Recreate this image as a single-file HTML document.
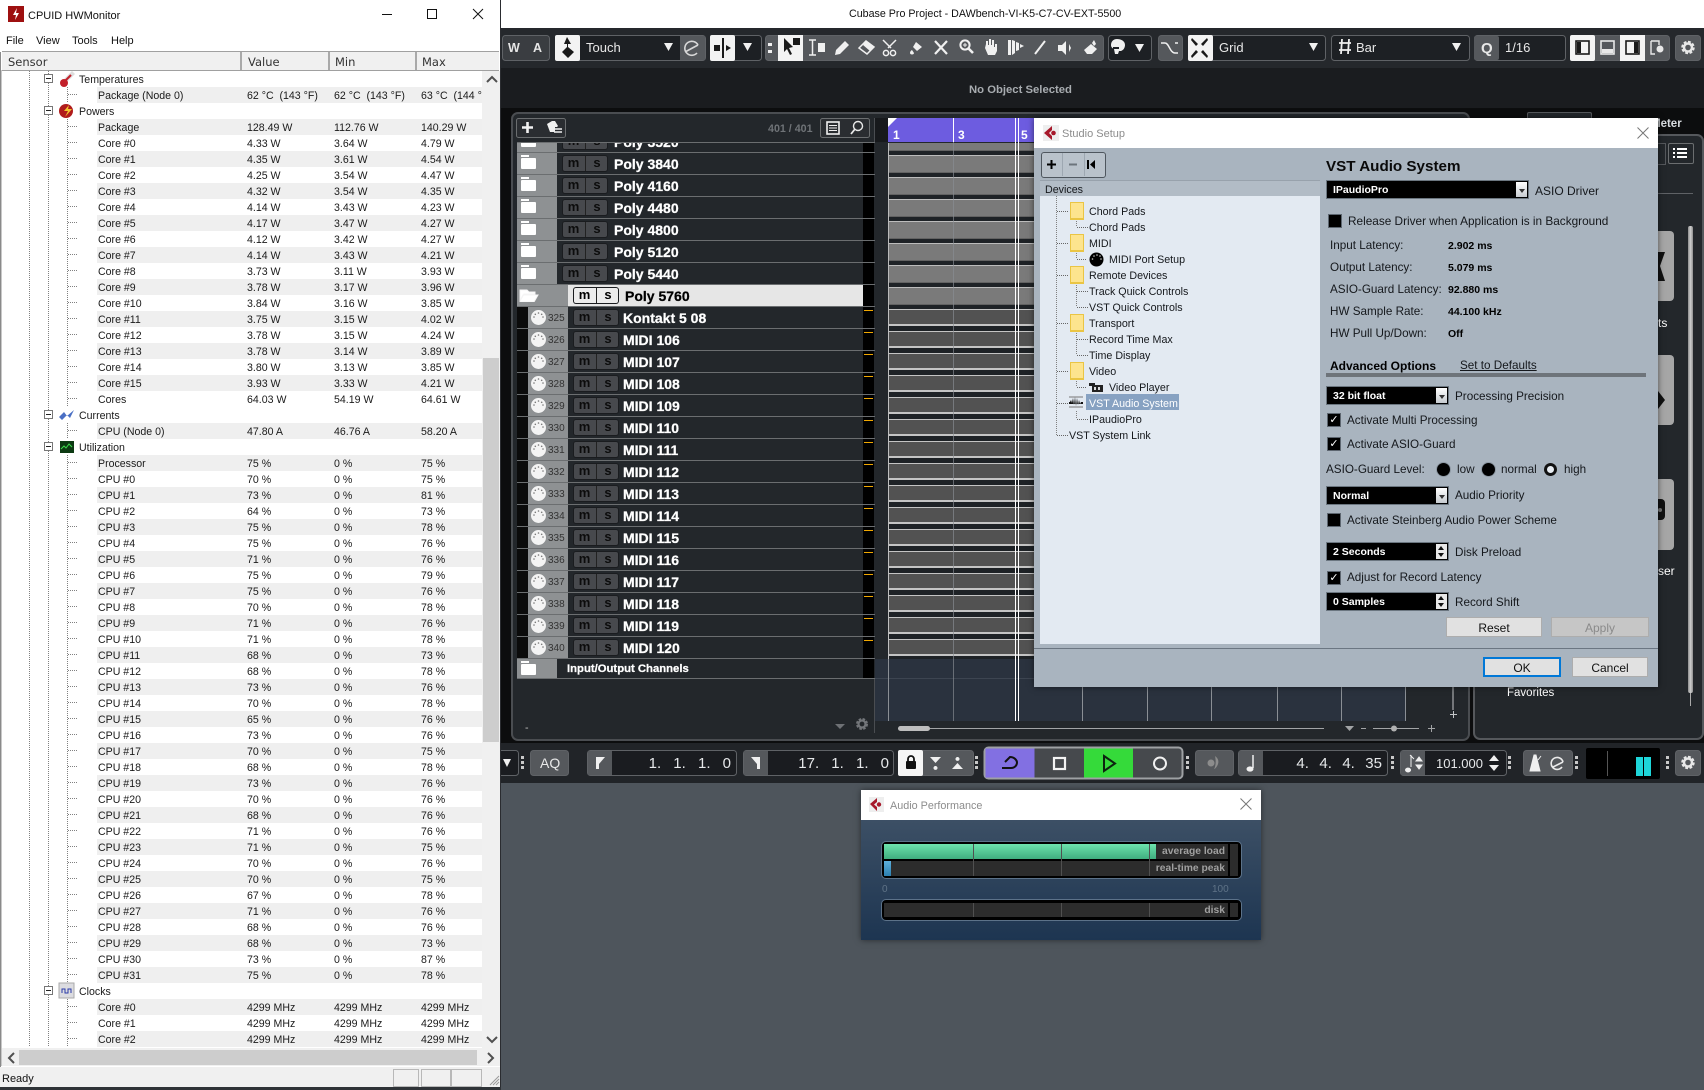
<!DOCTYPE html>
<html><head><meta charset="utf-8"><title>Cubase + HWMonitor</title>
<style>
html,body{margin:0;padding:0;width:1704px;height:1090px;overflow:hidden;background:#4e555c;font-family:"Liberation Sans",sans-serif}
.a0{position:absolute}
.x{position:absolute;white-space:pre;line-height:16px;font-size:10.7px;color:#15181c;margin-top:1px}
.bd{font-weight:bold}
/* HW monitor */
#hw{position:absolute;left:0;top:0;width:500px;height:1087px;background:#fff;overflow:hidden;border-right:1px solid #2a2c30}
#hd{position:absolute;left:2px;top:51px;width:497px;height:18px;background:#f0f0f0;border-top:1px solid #a0a0a0;border-bottom:1px solid #a0a0a0;font:11.5px/20px "DejaVu Sans",sans-serif;color:#333}
#hd span{position:absolute;top:0}
#hd i{position:absolute;top:0;width:2px;height:18px;background:#a9a9a9}
#tr{position:absolute;left:0;top:71px;width:482px;height:976px;overflow:hidden;font-size:10.6px;color:#1a1a1a}
.r,.g{position:relative;height:16px;line-height:16px;white-space:pre}
.r{background:repeating-linear-gradient(90deg,#808080 0 1px,transparent 1px 2px) 68px 7px/10px 1px no-repeat,repeating-linear-gradient(#808080 0 1px,transparent 1px 2px) 67px 0/1px 16px no-repeat}
.r.a{background:repeating-linear-gradient(90deg,#808080 0 1px,transparent 1px 2px) 68px 7px/10px 1px no-repeat,repeating-linear-gradient(#808080 0 1px,transparent 1px 2px) 67px 0/1px 16px no-repeat,linear-gradient(#efefef,#efefef) 97px 0/385px 16px no-repeat}
.r b,.r i,.r em,.r s,.g b{position:absolute;top:1px;font-weight:normal;font-style:normal;text-decoration:none}
.r b{left:98px}.r i{left:247px}.r em{left:334px}.r s{left:421px}
.g b{left:79px}
.g u{position:absolute;left:44px;top:3px;width:7px;height:7px;border:1px solid #777;background:#fff;text-decoration:none}
.g u::after{content:"";position:absolute;left:1px;top:3px;width:5px;height:1px;background:#222}
.g svg{position:absolute;left:58px;top:-1px}
.vl{position:absolute;width:1px;background:repeating-linear-gradient(#808080 0 1px,transparent 1px 2px)}
/* tracks */
.t{position:absolute;left:517px;width:358px;height:21px;border-bottom:1px solid #6b6e70;color:#fff;font-size:14px;font-weight:bold;line-height:23px;background:linear-gradient(#000,#000) 346px 0/11px 100% no-repeat,#23272b}
.m{background:linear-gradient(#f3a900,#f3a900) 347px 3px/9px 1px no-repeat,linear-gradient(#000,#000) 346px 0/11px 100% no-repeat,#23272b}
.t>em{position:absolute;top:0;height:21px;background:#8e9193}
.p>em{left:0;width:40px}.m>em,.sel>em{left:11px;width:40px}
.m::before{content:"";position:absolute;left:0;top:0;width:11px;height:21px;background:#0b0b0b}
.sel>em{left:0;width:51px}
.fd::before{content:"";position:absolute;left:4px;top:5px;width:15px;height:11px;background:#fff;border-radius:1px}
.fd::after{content:"";position:absolute;left:4px;top:2px;width:8px;height:2px;background:#fff}
.t>b{position:absolute;top:0;-webkit-text-stroke:.25px currentColor}
.p>b{left:97px}.m>b{left:106px}
.ms{position:absolute;top:3px;width:44px;height:15px;background:#47494d;border-radius:2px;box-shadow:0 0 0 1px #1a1c1f;font:bold 13px/13px "Liberation Sans",sans-serif;color:#0c0c0c;text-align:center}
.ms i{position:absolute;left:0;top:0;width:21px;font-style:normal}
.ms i+i{left:22px;width:22px;border-left:1px solid #222;height:15px}
.p .ms{left:46px}.m .ms,.sel .ms{left:57px}
.n{position:absolute;left:31px;top:0;font:normal 10px/23px "Liberation Sans",sans-serif;color:#333;width:17px}
.t svg{position:absolute;left:14px;top:3px}
/* dialogs */
.fo{position:absolute;left:1070px;width:12px;height:15px;background:#fde48e;border:1px solid #eac544;border-bottom-width:2px}
.blk{position:absolute;background:#000;border:1px solid #6b7680;box-shadow:inset 0 0 0 1px #000;color:#fff;font:bold 10.5px/19px "Liberation Sans",sans-serif;padding-left:6px;box-sizing:border-box;height:19px}
.arr{position:absolute;right:1px;top:1px;bottom:1px;width:11px;background:linear-gradient(#fff,#c6cbd0)}
.arr::after{content:"";position:absolute;left:3px;top:7px;border:3px solid transparent;border-top:4px solid #333;border-bottom:0}
.spn{position:absolute;right:1px;top:1px;bottom:1px;width:11px;background:#e8e8e8}
.spn::before{content:"";position:absolute;left:2px;top:2px;border:3px solid transparent;border-bottom:4px solid #111;border-top:0}
.spn::after{content:"";position:absolute;left:2px;bottom:2px;border:3px solid transparent;border-top:4px solid #111;border-bottom:0}
.cb{position:absolute;width:12px;height:12px;background:#000;border:1px solid #5d6670;color:#fff;font:bold 11px/12px "DejaVu Sans",sans-serif;text-align:center}
.rd{position:absolute;width:13px;height:13px;border-radius:50%;background:#000;box-shadow:0 0 0 1px #8d98a3}
.btn{position:absolute;background:#e1e1e1;border:1px solid #adadad;box-sizing:border-box;text-align:center;font-size:12px;height:20px;line-height:21px;color:#111}
</style></head><body>

<!-- Cubase base -->
<div class="a0" style="left:501px;top:0;width:1203px;height:28px;background:#fff"></div>
<div class="x" style="left:849px;top:5px;font-size:10.7px;color:#111">Cubase Pro Project - DAWbench-VI-K5-C7-CV-EXT-5500</div>
<div class="a0" style="left:501px;top:28px;width:1203px;height:40px;background:#25282c"></div>
<div class="a0" style="left:501px;top:68px;width:1203px;height:40px;background:#1a1c1f"></div>
<div class="x bd" style="left:969px;top:81px;font-size:11.3px;color:#a8acb0">No Object Selected</div>
<div class="a0" style="left:501px;top:108px;width:1203px;height:635px;background:#0c0d0e"></div>
<!-- project panel -->
<div class="a0" style="left:511px;top:112px;width:955px;height:625px;background:#23272b;border:2px solid #4a4d51;border-radius:7px;box-sizing:content-box"></div>
<div class="a0" style="left:1527px;top:112px;width:63px;height:10px;background:#23272b;border:1px solid #55585c;border-bottom:0;border-radius:2px 2px 0 0"></div>
<div class="a0" style="left:874px;top:118px;width:1px;height:615px;background:#4a4d51"></div>
<div class="x bd" style="left:768px;top:120px;font-size:10.7px;color:#6f7377">401 / 401</div>
<div class="a0" style="left:517px;top:142px;width:358px;height:1px;background:#6b6e70"></div>
<!-- track column -->
<div class="t p" style="top:131px;height:21px;clip-path:inset(12px 0 0 0)"><em class="fd"></em><div class="ms"><i>m</i><i>s</i></div><b>Poly 3520</b></div>
<div class="t p" style="top:153px"><em class="fd"></em><div class="ms"><i>m</i><i>s</i></div><b>Poly 3840</b></div>
<div class="t p" style="top:175px"><em class="fd"></em><div class="ms"><i>m</i><i>s</i></div><b>Poly 4160</b></div>
<div class="t p" style="top:197px"><em class="fd"></em><div class="ms"><i>m</i><i>s</i></div><b>Poly 4480</b></div>
<div class="t p" style="top:219px"><em class="fd"></em><div class="ms"><i>m</i><i>s</i></div><b>Poly 4800</b></div>
<div class="t p" style="top:241px"><em class="fd"></em><div class="ms"><i>m</i><i>s</i></div><b>Poly 5120</b></div>
<div class="t p" style="top:263px"><em class="fd"></em><div class="ms"><i>m</i><i>s</i></div><b>Poly 5440</b></div>
<div class="t sel" style="top:285px;background:linear-gradient(#000,#000) 346px 0/11px 100% no-repeat,linear-gradient(#e6e6e6,#e6e6e6) 51px 0/295px 100% no-repeat,#23272b;color:#000"><em></em><svg style="left:2px;top:2px" width="20" height="15" viewBox="0 0 20 15"><path d="M1 14V3h7l2 2h6v2H5L1 14l3-6h15l-4 7H1z" fill="#fff" stroke="#f4f4f4"/></svg><div class="ms" style="background:#ececec;color:#000"><i>m</i><i>s</i></div><b style="left:108px">Poly 5760</b></div>
<svg width="0" height="0" style="position:absolute"><symbol id="k" viewBox="0 0 15 15"><circle cx="7.500" cy="7.500" r="7.500" fill="#f4f4f4"/><g fill="#777"><circle cx="3" cy="7" r=".8"/><circle cx="4.300" cy="4.300" r=".8"/><circle cx="7.500" cy="3" r=".8"/><circle cx="10.700" cy="4.300" r=".8"/><circle cx="12" cy="7" r=".8"/></g></symbol></svg>
<div class="t m" style="top:307px"><em></em><svg width="15" height="15"><use href="#k"/></svg><span class="n">325</span><div class="ms"><i>m</i><i>s</i></div><b>Kontakt 5 08</b></div>
<div class="t m" style="top:329px"><em></em><svg width="15" height="15"><use href="#k"/></svg><span class="n">326</span><div class="ms"><i>m</i><i>s</i></div><b>MIDI 106</b></div>
<div class="t m" style="top:351px"><em></em><svg width="15" height="15"><use href="#k"/></svg><span class="n">327</span><div class="ms"><i>m</i><i>s</i></div><b>MIDI 107</b></div>
<div class="t m" style="top:373px"><em></em><svg width="15" height="15"><use href="#k"/></svg><span class="n">328</span><div class="ms"><i>m</i><i>s</i></div><b>MIDI 108</b></div>
<div class="t m" style="top:395px"><em></em><svg width="15" height="15"><use href="#k"/></svg><span class="n">329</span><div class="ms"><i>m</i><i>s</i></div><b>MIDI 109</b></div>
<div class="t m" style="top:417px"><em></em><svg width="15" height="15"><use href="#k"/></svg><span class="n">330</span><div class="ms"><i>m</i><i>s</i></div><b>MIDI 110</b></div>
<div class="t m" style="top:439px"><em></em><svg width="15" height="15"><use href="#k"/></svg><span class="n">331</span><div class="ms"><i>m</i><i>s</i></div><b>MIDI 111</b></div>
<div class="t m" style="top:461px"><em></em><svg width="15" height="15"><use href="#k"/></svg><span class="n">332</span><div class="ms"><i>m</i><i>s</i></div><b>MIDI 112</b></div>
<div class="t m" style="top:483px"><em></em><svg width="15" height="15"><use href="#k"/></svg><span class="n">333</span><div class="ms"><i>m</i><i>s</i></div><b>MIDI 113</b></div>
<div class="t m" style="top:505px"><em></em><svg width="15" height="15"><use href="#k"/></svg><span class="n">334</span><div class="ms"><i>m</i><i>s</i></div><b>MIDI 114</b></div>
<div class="t m" style="top:527px"><em></em><svg width="15" height="15"><use href="#k"/></svg><span class="n">335</span><div class="ms"><i>m</i><i>s</i></div><b>MIDI 115</b></div>
<div class="t m" style="top:549px"><em></em><svg width="15" height="15"><use href="#k"/></svg><span class="n">336</span><div class="ms"><i>m</i><i>s</i></div><b>MIDI 116</b></div>
<div class="t m" style="top:571px"><em></em><svg width="15" height="15"><use href="#k"/></svg><span class="n">337</span><div class="ms"><i>m</i><i>s</i></div><b>MIDI 117</b></div>
<div class="t m" style="top:593px"><em></em><svg width="15" height="15"><use href="#k"/></svg><span class="n">338</span><div class="ms"><i>m</i><i>s</i></div><b>MIDI 118</b></div>
<div class="t m" style="top:615px"><em></em><svg width="15" height="15"><use href="#k"/></svg><span class="n">339</span><div class="ms"><i>m</i><i>s</i></div><b>MIDI 119</b></div>
<div class="t m" style="top:637px"><em></em><svg width="15" height="15"><use href="#k"/></svg><span class="n">340</span><div class="ms"><i>m</i><i>s</i></div><b>MIDI 120</b></div>
<div class="t p" style="top:659px;height:19px"><em class="fd" style="height:19px"></em><b style="left:50px;font-size:11.300px;line-height:21px">Input/Output Channels</b></div>
<div class="x" style="left:525px;top:719px;color:#bbb">-</div>

<!-- arrangement -->
<div class="a0" style="left:875px;top:118px;width:13px;height:24px;background:#17191c"></div>
<div class="a0" style="left:888px;top:118px;width:146px;height:24px;background:#6d5ce0"></div>
<div class="x bd" style="left:893px;top:126px;font-size:12px;color:#fff">1</div>
<div class="x bd" style="left:958px;top:126px;font-size:12px;color:#fff">3</div>
<div class="x bd" style="left:1021px;top:126px;font-size:12px;color:#fff">5</div>
<div class="a0" style="left:953px;top:118px;width:1px;height:24px;background:#fff"></div>
<svg class="a0" style="left:888px;top:118px" width="10" height="10"><path d="M0 0h9L0 9z" fill="#fff"/></svg>
<div class="a0" style="left:875px;top:143px;width:159px;height:516px;background:#23272b"></div>
<div class="a0" style="left:888px;top:131px;width:146px;height:176px;clip-path:inset(12px 0 0 0);background:linear-gradient(#bbb,#bbb) 0 0/1px 100% no-repeat,linear-gradient(#1e2226 0 2px,#bcbcbc 2px 3px,#7a7a7a 3px 19px,#626262 19px 20px,#1e2226 20px 22px) 0 0/100% 22px"></div>
<div class="a0" style="left:888px;top:307px;width:146px;height:352px;background:linear-gradient(#c0c0c0,#c0c0c0) 0 0/1px 100% no-repeat,linear-gradient(#1e2226 0 2px,#c4c4c4 2px 3px,#525252 3px 17px,#c4c4c4 17px 19px,#1e2226 19px 22px) 0 0/100% 22px"></div>
<div class="a0" style="left:875px;top:659px;width:531px;height:62px;background:#2a323e"></div>
<div class="a0" style="left:875px;top:678px;width:531px;height:1px;background:#3d4551"></div>
<div class="a0" style="left:888px;top:659px;width:1px;height:62px;background:#8a8f95"></div>
<div class="a0" style="left:953px;top:142px;width:1px;height:579px;background:#8a8f95;opacity:.65"></div>
<div class="a0" style="left:1082px;top:659px;width:1px;height:62px;background:#8a8f95"></div>
<div class="a0" style="left:1147px;top:659px;width:1px;height:62px;background:#8a8f95"></div>
<div class="a0" style="left:1211px;top:659px;width:1px;height:62px;background:#8a8f95"></div>
<div class="a0" style="left:1277px;top:659px;width:1px;height:62px;background:#8a8f95"></div>
<div class="a0" style="left:1341px;top:659px;width:1px;height:62px;background:#8a8f95"></div>
<div class="a0" style="left:1405px;top:659px;width:1px;height:62px;background:#8a8f95"></div>
<div class="a0" style="left:1015px;top:118px;width:1px;height:603px;background:#fff"></div>
<div class="a0" style="left:1018px;top:118px;width:1px;height:603px;background:#fff"></div>

<!-- Right zone -->
<div class="a0" style="left:1473px;top:134px;width:227px;height:602px;background:#23272b;border:2px solid #55585c;border-radius:7px"></div>
<div class="x bd" style="left:1651px;top:115px;font-size:11.500px;color:#d9dde1">Meter</div>
<div class="a0" style="left:1658px;top:143px;width:7px;height:20px;border:1px solid #55585c;border-left:0"></div>
<div class="a0" style="left:1668px;top:143px;width:24px;height:19px;border:1px solid #6b6e70;border-radius:2px"></div>
<svg class="a0" style="left:1673px;top:146px" width="14" height="14"><path d="M0 2h2v2H0zM4 2h10v2H4zM0 6h2v2H0zM4 6h10v2H4zM0 10h2v2H0zM4 10h10v2H4z" fill="#fff"/></svg>
<div class="a0" style="left:1658px;top:193px;width:35px;height:1px;background:#5f6266"></div>
<div class="a0" style="left:1640px;top:231px;width:34px;height:70px;background:#a6a6a6;border-radius:4px"></div>
<div class="a0" style="left:1640px;top:355px;width:34px;height:70px;background:#a6a6a6;border-radius:4px"></div>
<div class="a0" style="left:1640px;top:479px;width:34px;height:71px;background:#a6a6a6;border-radius:4px"></div>
<svg class="a0" style="left:1650px;top:240px" width="20" height="170"><path d="M8 12h7L10 26l5 15H8z" fill="#111"/><path d="M8 151l7 9-7 9z" fill="#111"/></svg>
<div class="a0" style="left:1652px;top:499px;width:13px;height:21px;background:#111;border-radius:4px"></div>
<div class="a0" style="left:1658px;top:508px;width:4px;height:4px;background:#777;border-radius:50%"></div>
<div class="x" style="left:1658px;top:314px;font-size:12px;color:#fff">ts</div>
<div class="x" style="left:1658px;top:562px;font-size:12px;color:#fff">ser</div>
<div class="x" style="left:1507px;top:684px;font-size:11.500px;color:#fff">Favorites</div>
<div class="a0" style="left:1688px;top:226px;width:5px;height:467px;background:linear-gradient(90deg,#8d8d8d,#cfcfcf,#8d8d8d);border-radius:2px"></div>
<div class="a0" style="left:1690px;top:693px;width:1px;height:13px;background:#aaa"></div>

<!-- Transport background -->
<div class="a0" style="left:501px;top:743px;width:1203px;height:40px;background:#212428"></div>

<!-- Overlay: toolbar + transport -->
<svg class="a0" style="left:0;top:0" width="1704" height="1090" font-family="Liberation Sans, sans-serif">
<g stroke="#5f6266" fill="#1d2024">
<rect x="502.500" y="35.500" width="47" height="25" rx="3" fill="#3a3d41"/>
<rect x="555.500" y="35.500" width="150" height="25" rx="3"/>
<rect x="710.500" y="35.500" width="51" height="25" rx="3"/>
<rect x="765.500" y="35.500" width="338" height="25" rx="3" fill="#55585c"/>
<rect x="1108.500" y="35.500" width="43" height="25" rx="3"/>
<rect x="1158.500" y="35.500" width="24" height="25" rx="3" fill="#55585c"/>
<rect x="1188.500" y="35.500" width="137" height="25" rx="3"/>
<rect x="1331.500" y="35.500" width="138" height="25" rx="3"/>
<rect x="1474.500" y="35.500" width="91" height="25" rx="3"/>
<rect x="1570.500" y="35.500" width="99" height="25" rx="3" fill="#55585c"/>
<rect x="1675.500" y="35.500" width="25" height="25" rx="3" fill="#55585c"/>
</g>
<g fill="#f3f3f3">
<rect x="555" y="35" width="25" height="26" rx="2"/><rect x="710" y="35" width="25" height="26" rx="2"/><rect x="778" y="35" width="25" height="26"/>
<rect x="1188" y="35" width="25" height="26" rx="2"/><rect x="1570" y="35" width="25" height="26" rx="2"/><rect x="1620" y="35" width="25" height="26"/>
</g>
<rect x="680" y="36" width="25" height="24" fill="#55585c"/><rect x="1474" y="36" width="25" height="24" rx="2" fill="#55585c"/>
<g font-weight="bold" font-size="12.500" fill="#e6e6e6"><text x="508" y="52">W</text><text x="533" y="52">A</text></g>
<g font-size="13" fill="#e8e8e8"><text x="586" y="52">Touch</text><text x="1219" y="52">Grid</text><text x="1356" y="52">Bar</text><text x="1505" y="52">1/16</text></g>
<!-- toolbar icons -->
<g fill="#1a1a1a">
<path d="M567 37l4 7h-3v3l6 5-6 6-6-6 5-5v-3h-3z"/>
<path d="M722 38h2v20h-2zM714 45h6v6h-6zM726 45l5 3-5 3z"/>
<path d="M784 38l9 9-4 1 3 6-2 1-3-6-3 3zM793 38h7v7h-7z"/>
<path d="M1192 38l6 6-2 2-5-6zM1207 38l-6 6 2 2 5-6zM1192 58l6-6-2-2-5 6zM1207 58l-6-6 2-2 5 6z"/>
<rect x="1576" y="41" width="13" height="13" fill="none" stroke="#1a1a1a" stroke-width="1.600"/><rect x="1577" y="42" width="4" height="11"/>
<rect x="1626" y="41" width="13" height="13" fill="none" stroke="#1a1a1a" stroke-width="1.600"/><rect x="1634" y="42" width="4" height="11"/>
</g>
<g fill="#f0f0f0">
<path d="M664 43h9l-4.500 8zM743 43h9l-4.500 8zM1309 43h9l-4.500 8zM1452 43h9l-4.500 8z"/>
<rect x="768" y="43" width="4" height="3"/><rect x="768" y="50" width="4" height="3"/>
<path d="M809 40h7M809 55h7M812.500 40v15" stroke="#f0f0f0" stroke-width="1.500" fill="none"/><rect x="818" y="43" width="7" height="9"/>
<path d="M835 55l1-5 9-9 4 4-9 9z"/>
<path d="M859 48l7-7 8 6-7 7z" fill="none" stroke="#f0f0f0" stroke-width="1.500"/><path d="M866 41l8 6-4 4-7-6z"/>
<path d="M883 40l8 8M896 40l-8 8" stroke="#f0f0f0" stroke-width="1.500"/><circle cx="886" cy="53" r="2.600" fill="none" stroke="#f0f0f0" stroke-width="1.500"/><circle cx="893" cy="53" r="2.600" fill="none" stroke="#f0f0f0" stroke-width="1.500"/>
<path d="M916 42l6 5-5 4-4-4zM910 53c0-2 2-3 2-3l2 3c0 2-4 2-4 0z"/>
<path d="M935 41l12 13M947 41l-12 13" stroke="#f0f0f0" stroke-width="2.200"/>
<circle cx="965" cy="45" r="4.600" fill="none" stroke="#f0f0f0" stroke-width="2"/><path d="M968 48l5 5" stroke="#f0f0f0" stroke-width="2.600"/><path d="M963 45h4M965 43v4" stroke="#f0f0f0"/>
<path d="M986 44v-3h2v4h1v-6h2v6h1v-5h2v7h1v-3h2v7l-2 4h-7l-3-7z"/>
<path d="M1008 40h3v15h-3zM1012 40l3 1v12l-3 2zM1016 42l3 1v7l-3 1zM1020 44l4 2-4 2z"/>
<path d="M1035 54l10-13" stroke="#f0f0f0" stroke-width="2"/>
<path d="M1058 45h4l4-4v14l-4-4h-4zM1069 44l2 4-2 4z"/>
<path d="M1084 50l7-6 6 5-5 5h-5zM1094 40l2 4-2 2-2-3z"/>
<path d="M1117 39c-4 0-6 3-6 6 0 2 1 3 3 4l1 5h3l1-3h2c3-1 4-4 4-6 0-4-4-6-8-6z"/><path d="M1113 47h6v2h-6z" fill="#1d2024"/>
<path d="M1135 44h9l-4.500 8z"/>
<path d="M1161 43h4c4 0 5 10 10 10h3M1175 43h3" stroke="#f0f0f0" stroke-width="1.500" fill="none"/>
<path d="M1339 43h12M1339 50h12M1342 39l-1 15M1349 39l-1 15" stroke="#f0f0f0" stroke-width="1.800"/>
</g>
<g font-weight="bold" font-size="15" fill="#e8e8e8"><text x="1481" y="53">Q</text></g>
<path d="M698 45a7 7 0 1 0-1 8M685 52l13-7" fill="none" stroke="#d8d8d8" stroke-width="1.600"/>
<rect x="1601" y="41" width="13" height="13" fill="none" stroke="#e8e8e8" stroke-width="1.600"/><rect x="1602" y="49" width="11" height="4" fill="#e8e8e8"/>
<path d="M1651 41h8v4M1651 41v13h4" fill="none" stroke="#e8e8e8" stroke-width="1.400"/><circle cx="1660" cy="49" r="3.500" fill="#e8e8e8"/>
<circle cx="1688" cy="47.500" r="5" fill="none" stroke="#e8e8e8" stroke-width="3.500" stroke-dasharray="2.500 1.400"/><circle cx="1688" cy="47.500" r="4" fill="none" stroke="#e8e8e8" stroke-width="2.500"/>

<!-- project buttons -->
<g stroke="#6b6e70" fill="#2a2d31"><rect x="516.500" y="118.500" width="49" height="19" rx="2"/><rect x="820.500" y="118.500" width="49" height="19" rx="2"/></g>
<path d="M522 127.500h11M527.500 122v11" stroke="#f2f2f2" stroke-width="2.600"/>
<path d="M547 124l5-3h3l3 5-1 1h-2v5h-5z" fill="#f0f0f0"/><path d="M554 129h8M554 132h8" stroke="#f0f0f0" stroke-width="1.500"/>
<rect x="827" y="122" width="12" height="12" fill="none" stroke="#f0f0f0" stroke-width="1.600"/><path d="M829 125.500h8M829 128h8M829 130.500h8" stroke="#f0f0f0"/>
<circle cx="858" cy="126" r="4.500" fill="none" stroke="#e8e8e8" stroke-width="1.400"/><path d="M855 129l-4 5" stroke="#e8e8e8" stroke-width="1.800"/>
<!-- bottom controls -->
<path d="M835 724h10l-5 5z" fill="#6e7175"/>
<circle cx="862" cy="724" r="4.500" fill="none" stroke="#73767a" stroke-width="3" stroke-dasharray="2.300 1.300"/><circle cx="862" cy="724" r="3.500" fill="none" stroke="#73767a" stroke-width="2.200"/>
<path d="M898 728.500H1324" stroke="#a2a4a6"/><rect x="898" y="726" width="32" height="5" rx="2.500" fill="#bdbdbd"/>
<path d="M1345 726h9l-4.500 5z" fill="#a2a4a6"/><path d="M1361 728.500h5M1373 728.500h46M1428 728.500h7M1431.500 725v7" fill="none" stroke="#a2a4a6"/><circle cx="1394" cy="728.500" r="3" fill="#b0b0b0"/>
<path d="M1453 687v23M1450 714.500h7M1453.500 711v7" stroke="#c4c6c8"/>

<!-- transport -->
<g stroke="#5f6266" fill="#1a1c20">
<rect x="498.500" y="750.500" width="20" height="25" rx="3"/>
<rect x="530.500" y="750.500" width="38" height="25" rx="3" fill="#55585c"/>
<rect x="587.500" y="750.500" width="149" height="25" rx="3"/>
<rect x="743.500" y="750.500" width="150" height="25" rx="3"/>
<rect x="898.500" y="750.500" width="75" height="25" rx="3" fill="#55585c"/>
<rect x="1195.500" y="750.500" width="38" height="25" rx="3" fill="#55585c"/>
<rect x="1238.500" y="750.500" width="149" height="25" rx="3"/>
<rect x="1400.500" y="750.500" width="106" height="25" rx="3"/>
<rect x="1523.500" y="750.500" width="49" height="25" rx="3" fill="#55585c"/>
<rect x="1675.500" y="750.500" width="25" height="25" rx="3" fill="#55585c"/>
</g>
<rect x="498" y="750" width="3" height="26" fill="#0c0d0e"/>
<g fill="#55585c"><rect x="588" y="751" width="24" height="24"/><rect x="744" y="751" width="24" height="24"/><rect x="1239" y="751" width="24" height="24"/><rect x="1401" y="751" width="24" height="24"/></g>
<rect x="898" y="750" width="25" height="26" rx="2" fill="#f5f5f5"/>
<rect x="984.500" y="747.500" width="198" height="31" rx="4" fill="#46494d" stroke="#9ea1a4" stroke-width="2"/>
<rect x="985.500" y="748.500" width="49" height="29" fill="#8270e2"/><rect x="1084" y="748.500" width="49" height="29" fill="#35da3a"/>
<path d="M503 759h8l-4 8zM596 757h9l-6 7v5h-3zM760 757h-9l6 7v5h3z" fill="#f0f0f0"/>
<g fill="#c8c8c8"><rect x="521" y="756" width="3" height="3"/><rect x="521" y="761" width="3" height="3"/><rect x="521" y="766" width="3" height="3"/><rect x="975" y="756" width="3" height="3"/><rect x="975" y="761" width="3" height="3"/><rect x="975" y="766" width="3" height="3"/><rect x="1186" y="756" width="3" height="3"/><rect x="1186" y="761" width="3" height="3"/><rect x="1186" y="766" width="3" height="3"/><rect x="1391" y="756" width="3" height="3"/><rect x="1391" y="761" width="3" height="3"/><rect x="1391" y="766" width="3" height="3"/><rect x="1508" y="756" width="3" height="3"/><rect x="1508" y="761" width="3" height="3"/><rect x="1508" y="766" width="3" height="3"/><rect x="1575" y="756" width="3" height="3"/><rect x="1575" y="761" width="3" height="3"/><rect x="1575" y="766" width="3" height="3"/><rect x="1666" y="756" width="3" height="3"/><rect x="1666" y="761" width="3" height="3"/><rect x="1666" y="766" width="3" height="3"/></g>
<path d="M908 761v-2a3 3 0 0 1 6 0v2" fill="none" stroke="#111" stroke-width="1.800"/><rect x="906" y="761" width="10" height="8" rx="1" fill="#111"/>
<path d="M930 757h11l-5.500 6zM935 766a2 2 0 1 0 1 0zM952 769h11l-5.500-6zM957 757a2 2 0 1 0 1 0z" fill="#f0f0f0"/>
<path d="M1002 768h9c4 0 6-3 6-5.500S1014 757 1010 757L1005 762" fill="none" stroke="#111" stroke-width="2"/>
<rect x="1054" y="758" width="11" height="11" fill="none" stroke="#f3f3f3" stroke-width="2.200"/>
<path d="M1104 756l11 7.500-11 7.500z" fill="none" stroke="#0d2410" stroke-width="2"/>
<circle cx="1160" cy="763.500" r="6" fill="none" stroke="#f0f0f0" stroke-width="2"/>
<path d="M1215 756c3 2 4 5 3 8s-3 5-4 5c2-3 2-9 1-13z" fill="#8c8c8c"/><circle cx="1211" cy="763" r="3.500" fill="#8c8c8c"/>
<path d="M1253 755v13" stroke="#f0f0f0" stroke-width="1.500"/><ellipse cx="1250" cy="769" rx="3.500" ry="2.600" fill="#f0f0f0"/>
<path d="M1411 755v12M1408 768a2.500 2 0 1 0 .1 0M1414 759l-4-4M1419 757l-3 4h6zM1419 769l-3-4h6z" fill="#f0f0f0" stroke="#f0f0f0"/>
<path d="M1489 761l5-6 5 6zM1489 765l5 6 5-6z" fill="#f0f0f0"/>
<path d="M1530 771l4-16h2l4 16zM1541 756l-3 4" fill="#f0f0f0" stroke="#f0f0f0"/>
<path d="M1563 762a6 6 0 1 0-1 5M1553 767l10-5" fill="none" stroke="#eaeaea" stroke-width="1.600"/>
<rect x="1586" y="748" width="74" height="31" rx="2" fill="#000"/><rect x="1607" y="751" width="1" height="25" fill="#555"/><rect x="1636" y="757" width="7" height="19" fill="#1ed6da"/><rect x="1644" y="757" width="7" height="19" fill="#1ed6da"/>
<circle cx="1688" cy="762.500" r="5" fill="none" stroke="#e8e8e8" stroke-width="3.500" stroke-dasharray="2.500 1.400"/><circle cx="1688" cy="762.500" r="4" fill="none" stroke="#e8e8e8" stroke-width="2.500"/>
<text x="540" y="768" font-size="14" fill="#e8e8e8">AQ</text>
<g font-size="15" fill="#e6e8ea" text-anchor="end" word-spacing="8"><text x="731" y="768">1. 1. 1.  0</text><text x="889" y="768">17. 1. 1.  0</text></g>
<text x="1382" y="768" font-size="15" fill="#e6e8ea" text-anchor="end" word-spacing="6.300">4. 4. 4. 35</text>
<text x="1436" y="768" font-size="13" fill="#e6e8ea">101.000</text>
</svg>

<!-- Studio Setup dialog -->
<div class="a0" style="left:1034px;top:118px;width:624px;height:569px;background:#a9b4bf;box-shadow:0 0 6px rgba(0,0,0,.55)"></div>
<div class="a0" style="left:1034px;top:118px;width:624px;height:30px;background:#fff"></div>
<svg class="a0" style="left:1043px;top:125px" width="16" height="16"><rect width="16" height="16" fill="#eee"/><path d="M1 8l8-7v4L6 8l3 3v4z" fill="#a7192b"/><circle cx="10.500" cy="8" r="2.300" fill="#a7192b"/></svg>
<div class="x" style="left:1062px;top:125px;font-size:11px;color:#8c8c8c">Studio Setup</div>
<svg class="a0" style="left:1637px;top:127px" width="12" height="12"><path d="M.5.500l11 11M11.500.500l-11 11" stroke="#777" fill="none"/></svg>
<div class="a0" style="left:1041px;top:152px;width:63px;height:24px;background:#b9c2cb;border:1px solid #4e565e;border-radius:3px"></div>
<svg class="a0" style="left:1041px;top:152px" width="65" height="26"><path d="M21.500 1v23M43.500 1v23" stroke="#9da7b1"/><path d="M6 12.500h9M10.500 8v9" stroke="#000" stroke-width="2"/><path d="M28 12.500h8" stroke="#6c747c" stroke-width="2"/><path d="M46 8h2v9h-2zM49 12.500l5-4.500v9z" fill="#000"/></svg>
<div class="a0" style="left:1040px;top:180px;width:280px;height:15px;background:#b2bcc6;border-bottom:1px solid #616a73;border-top:1px solid #98a2ac"></div>
<div class="x" style="left:1045px;top:181px">Devices</div>
<div class="a0" style="left:1040px;top:196px;width:280px;height:448px;background:#e3eaf2"></div>
<div class="vl" style="left:1056px;top:196px;height:239px"></div>
<div class="vl" style="left:1076px;top:219px;height:8px"></div><div class="vl" style="left:1076px;top:251px;height:8px"></div><div class="vl" style="left:1076px;top:283px;height:24px"></div><div class="vl" style="left:1076px;top:331px;height:24px"></div><div class="vl" style="left:1076px;top:379px;height:8px"></div><div class="vl" style="left:1076px;top:411px;height:8px"></div>
<svg class="a0" style="left:1040px;top:196px" width="60" height="250"><g stroke="#666" stroke-dasharray="1 1"><path d="M17 15.500h12M17 47.500h12M17 79.500h12M17 127.500h12M17 175.500h12M17 207.500h12M17 239.500h12M37 31.500h11M37 63.500h9M37 95.500h11M37 111.500h11M37 143.500h11M37 159.500h11M37 191.500h9M37 223.500h11"/></g></svg>
<div class="fo" style="top:202px"></div><div class="fo" style="top:234px"></div><div class="fo" style="top:266px"></div><div class="fo" style="top:314px"></div><div class="fo" style="top:362px"></div>
<svg class="a0" style="left:1089px;top:252px" width="15" height="15"><circle cx="7.500" cy="7.500" r="7" fill="#000"/><g fill="#ccc"><circle cx="3.500" cy="7" r=".8"/><circle cx="5" cy="4" r=".8"/><circle cx="8" cy="3" r=".8"/><circle cx="11" cy="4" r=".8"/><circle cx="12" cy="7" r=".8"/></g></svg>
<svg class="a0" style="left:1089px;top:382px" width="15" height="10"><path d="M0 1h6v2h8v7H3V4H0z" fill="#222"/><path d="M5 5h2v3H5zM9 5h2v3H9z" fill="#ddd"/></svg>
<svg class="a0" style="left:1069px;top:394px" width="15" height="16"><path d="M0 3h14M0 13h14" stroke="#777"/><path d="M0 8h1l1-2 1 3 1-5 1 7 1-8 1 9 1-8 1 7 1-5 1 4 1-2h2v2H0z" fill="#111"/></svg>
<div class="a0" style="left:1086px;top:394px;width:93px;height:16px;background:#87a2c2"></div>
<div class="x" style="left:1089px;top:203px">Chord Pads</div>
<div class="x" style="left:1089px;top:219px">Chord Pads</div>
<div class="x" style="left:1089px;top:235px">MIDI</div>
<div class="x" style="left:1109px;top:251px">MIDI Port Setup</div>
<div class="x" style="left:1089px;top:267px">Remote Devices</div>
<div class="x" style="left:1089px;top:283px">Track Quick Controls</div>
<div class="x" style="left:1089px;top:299px">VST Quick Controls</div>
<div class="x" style="left:1089px;top:315px">Transport</div>
<div class="x" style="left:1089px;top:331px">Record Time Max</div>
<div class="x" style="left:1089px;top:347px">Time Display</div>
<div class="x" style="left:1089px;top:363px">Video</div>
<div class="x" style="left:1109px;top:379px">Video Player</div>
<div class="x" style="left:1089px;top:395px;color:#fff">VST Audio System</div>
<div class="x" style="left:1089px;top:411px">IPaudioPro</div>
<div class="x" style="left:1069px;top:427px">VST System Link</div>
<!-- right settings -->
<div class="x bd" style="left:1326px;top:158px;font-size:15.200px;color:#0a0a0a">VST Audio System</div>
<div class="blk" style="left:1326px;top:180px;width:203px">IPaudioPro<span class="arr"></span></div>
<div class="x" style="left:1535px;top:182px;font-size:12px">ASIO Driver</div>
<div class="cb" style="left:1328px;top:214px"></div>
<div class="x" style="left:1348px;top:212px;font-size:11.800px">Release Driver when Application is in Background</div>
<div class="x" style="left:1330px;top:237px;font-size:11.700px">Input Latency:</div><div class="x bd" style="left:1448px;top:237px;font-size:10.500px;color:#000">2.902 ms</div>
<div class="x" style="left:1330px;top:259px;font-size:11.700px">Output Latency:</div><div class="x bd" style="left:1448px;top:259px;font-size:10.500px;color:#000">5.079 ms</div>
<div class="x" style="left:1330px;top:281px;font-size:11.700px">ASIO-Guard Latency:</div><div class="x bd" style="left:1448px;top:281px;font-size:10.500px;color:#000">92.880 ms</div>
<div class="x" style="left:1330px;top:303px;font-size:11.700px">HW Sample Rate:</div><div class="x bd" style="left:1448px;top:303px;font-size:10.500px;color:#000">44.100 kHz</div>
<div class="x" style="left:1330px;top:325px;font-size:11.700px">HW Pull Up/Down:</div><div class="x bd" style="left:1448px;top:325px;font-size:10.500px;color:#000">Off</div>
<div class="x bd" style="left:1330px;top:357px;font-size:12px;color:#000">Advanced Options</div>
<div class="x" style="left:1460px;top:357px;font-size:11.700px;text-decoration:underline">Set to Defaults</div>
<div class="a0" style="left:1326px;top:373px;width:320px;height:4px;background:#6e747a"></div>
<div class="blk" style="left:1326px;top:386px;width:123px">32 bit float<span class="arr"></span></div>
<div class="x" style="left:1455px;top:388px;font-size:11.700px">Processing Precision</div>
<div class="cb" style="left:1327px;top:413px">✓</div><div class="x" style="left:1347px;top:412px;font-size:11.700px">Activate Multi Processing</div>
<div class="cb" style="left:1327px;top:437px">✓</div><div class="x" style="left:1347px;top:436px;font-size:11.700px">Activate ASIO-Guard</div>
<div class="x" style="left:1326px;top:461px;font-size:11.700px">ASIO-Guard Level:</div>
<div class="rd" style="left:1437px;top:463px"></div><div class="x" style="left:1457px;top:461px;font-size:11.700px">low</div>
<div class="rd" style="left:1482px;top:463px"></div><div class="x" style="left:1501px;top:461px;font-size:11.700px">normal</div>
<div class="rd" style="left:1544px;top:463px;background:#e8edf2;box-shadow:inset 0 0 0 3px #111"></div><div class="x" style="left:1564px;top:461px;font-size:11.700px">high</div>
<div class="blk" style="left:1326px;top:486px;width:123px">Normal<span class="arr"></span></div>
<div class="x" style="left:1455px;top:487px;font-size:11.700px">Audio Priority</div>
<div class="cb" style="left:1327px;top:513px"></div><div class="x" style="left:1347px;top:512px;font-size:11.700px">Activate Steinberg Audio Power Scheme</div>
<div class="blk" style="left:1326px;top:542px;width:123px">2 Seconds<span class="spn"></span></div>
<div class="x" style="left:1455px;top:544px;font-size:11.700px">Disk Preload</div>
<div class="cb" style="left:1327px;top:571px">✓</div><div class="x" style="left:1347px;top:569px;font-size:11.700px">Adjust for Record Latency</div>
<div class="blk" style="left:1326px;top:592px;width:123px">0 Samples<span class="spn"></span></div>
<div class="x" style="left:1455px;top:594px;font-size:11.700px">Record Shift</div>
<div class="btn" style="left:1446px;top:617px;width:96px">Reset</div>
<div class="btn" style="left:1551px;top:617px;width:98px;background:#c6c6c6;color:#8a8a8a">Apply</div>
<div class="a0" style="left:1034px;top:648px;width:624px;height:1px;background:#6b7682"></div>
<div class="btn" style="left:1483px;top:657px;width:78px;border:2px solid #0078d7;line-height:19px">OK</div>
<div class="btn" style="left:1572px;top:657px;width:76px">Cancel</div>

<!-- Audio Performance -->
<div class="a0" style="left:861px;top:790px;width:400px;height:150px;background:linear-gradient(#44566a,#1d3551);box-shadow:0 0 6px rgba(0,0,0,.5)"></div>
<div class="a0" style="left:861px;top:790px;width:400px;height:30px;background:#fff"></div>
<svg class="a0" style="left:869px;top:797px" width="15" height="15"><rect width="15" height="15" fill="#eee"/><path d="M1 7l7-6v4L5 7.500l3 2.500v4z" fill="#a7192b"/><circle cx="10" cy="7.500" r="2.200" fill="#a7192b"/></svg>
<div class="x" style="left:890px;top:797px;font-size:10.800px;color:#8c8c8c">Audio Performance</div>
<svg class="a0" style="left:1240px;top:798px" width="12" height="12"><path d="M.5.500l11 11M11.500.500l-11 11" stroke="#777" fill="none"/></svg>
<div class="a0" style="left:881px;top:841px;width:359px;height:36px;background:#000;border:1px solid #5c7289;border-radius:5px"></div>
<div class="a0" style="left:884px;top:844px;width:344px;height:15px;background:#2c2c2c"></div>
<div class="a0" style="left:884px;top:844px;width:272px;height:15px;background:linear-gradient(#6de3ad,#3fae7f)"></div>
<div class="a0" style="left:884px;top:861px;width:344px;height:15px;background:#2c2c2c"></div>
<div class="a0" style="left:884px;top:861px;width:7px;height:15px;background:linear-gradient(#5dafdc,#2c7fb0)"></div>
<div class="a0" style="left:1230px;top:844px;width:8px;height:32px;background:#2c2c2c"></div>
<div class="a0" style="left:973px;top:844px;width:1px;height:32px;background:#505050"></div>
<div class="a0" style="left:1061px;top:844px;width:1px;height:32px;background:#505050"></div>
<div class="a0" style="left:1149px;top:844px;width:1px;height:32px;background:#505050"></div>
<div class="x bd" style="left:1161px;top:843px;font-size:10.300px;color:#a0a0a0;width:64px;text-align:right">average load</div>
<div class="x bd" style="left:1145px;top:860px;font-size:10.300px;color:#a0a0a0;width:80px;text-align:right">real-time peak</div>
<div class="x" style="left:882px;top:881px;font-size:10px;color:#5f7387">0</div>
<div class="x" style="left:1212px;top:881px;font-size:10px;color:#5f7387">100</div>
<div class="a0" style="left:881px;top:899px;width:359px;height:20px;background:#000;border:1px solid #5c7289;border-radius:5px"></div>
<div class="a0" style="left:884px;top:903px;width:344px;height:14px;background:#2c2c2c"></div>
<div class="a0" style="left:1230px;top:903px;width:8px;height:14px;background:#2c2c2c"></div>
<div class="a0" style="left:973px;top:903px;width:1px;height:14px;background:#505050"></div><div class="a0" style="left:1061px;top:903px;width:1px;height:14px;background:#505050"></div><div class="a0" style="left:1149px;top:903px;width:1px;height:14px;background:#505050"></div>
<div class="x bd" style="left:1200px;top:902px;font-size:10.300px;color:#a0a0a0;width:25px;text-align:right">disk</div>

<!-- HWMonitor window -->
<div id="hw">
<svg class="a0" style="left:8px;top:6px" width="16" height="16"><rect width="16" height="16" fill="#9e1010"/><path d="M9 2L5 9h3l-1 5 4-7H8z" fill="#fff"/></svg>
<div class="x" style="left:28px;top:7px;font-size:11px;color:#111">CPUID HWMonitor</div>
<svg class="a0" style="left:380px;top:8px" width="110" height="14"><path d="M2 6.500h10M47.500 1.500h9v9h-9zM93 1l10 10M103 1L93 11" stroke="#111" fill="none"/></svg>
<div class="x" style="left:6px;top:32px;font-size:11px;color:#111">File</div>
<div class="x" style="left:36px;top:32px;font-size:11px;color:#111">View</div>
<div class="x" style="left:72px;top:32px;font-size:11px;color:#111">Tools</div>
<div class="x" style="left:111px;top:32px;font-size:11px;color:#111">Help</div>
<div id="hd"><span style="left:6px">Sensor</span><i style="left:238px"></i><span style="left:246px">Value</span><i style="left:326px"></i><span style="left:333px">Min</span><i style="left:413px"></i><span style="left:420px">Max</span></div>
<div id="tr">
<div class="vl" style="left:29px;top:0;height:976px"></div><div class="vl" style="left:48px;top:0;height:976px"></div>
<div class="g"><u></u><svg width="18" height="18"><path d="M14 1l3 3-8 8-3-3z" fill="#ddd"/><circle cx="6" cy="13" r="4" fill="#c2202a"/><path d="M6 12l7-7" stroke="#c2202a" stroke-width="2"/></svg><b>Temperatures</b></div>
<div class="r a"><b>Package (Node 0)</b><i>62 °C  (143 °F)</i><em>62 °C  (143 °F)</em><s>63 °C  (144 °F)</s></div>
<div class="g"><u></u><svg width="18" height="18"><circle cx="8" cy="9" r="7" fill="#b01c1c"/><path d="M11 3L6 9h4l-3 6 7-8h-4z" fill="#f4c430"/></svg><b>Powers</b></div>
<div class="r a"><b>Package</b><i>128.49 W</i><em>112.76 W</em><s>140.29 W</s></div>
<div class="r"><b>Core #0</b><i>4.33 W</i><em>3.64 W</em><s>4.79 W</s></div>
<div class="r a"><b>Core #1</b><i>4.35 W</i><em>3.61 W</em><s>4.54 W</s></div>
<div class="r"><b>Core #2</b><i>4.25 W</i><em>3.54 W</em><s>4.47 W</s></div>
<div class="r a"><b>Core #3</b><i>4.32 W</i><em>3.54 W</em><s>4.35 W</s></div>
<div class="r"><b>Core #4</b><i>4.14 W</i><em>3.43 W</em><s>4.23 W</s></div>
<div class="r a"><b>Core #5</b><i>4.17 W</i><em>3.47 W</em><s>4.27 W</s></div>
<div class="r"><b>Core #6</b><i>4.12 W</i><em>3.42 W</em><s>4.27 W</s></div>
<div class="r a"><b>Core #7</b><i>4.14 W</i><em>3.43 W</em><s>4.21 W</s></div>
<div class="r"><b>Core #8</b><i>3.73 W</i><em>3.11 W</em><s>3.93 W</s></div>
<div class="r a"><b>Core #9</b><i>3.78 W</i><em>3.17 W</em><s>3.96 W</s></div>
<div class="r"><b>Core #10</b><i>3.84 W</i><em>3.16 W</em><s>3.85 W</s></div>
<div class="r a"><b>Core #11</b><i>3.75 W</i><em>3.15 W</em><s>4.02 W</s></div>
<div class="r"><b>Core #12</b><i>3.78 W</i><em>3.15 W</em><s>4.24 W</s></div>
<div class="r a"><b>Core #13</b><i>3.78 W</i><em>3.14 W</em><s>3.89 W</s></div>
<div class="r"><b>Core #14</b><i>3.80 W</i><em>3.13 W</em><s>3.85 W</s></div>
<div class="r a"><b>Core #15</b><i>3.93 W</i><em>3.33 W</em><s>4.21 W</s></div>
<div class="r"><b>Cores</b><i>64.03 W</i><em>54.19 W</em><s>64.61 W</s></div>
<div class="g"><u></u><svg width="18" height="18"><path d="M1 11l5-5 3 4 7-6-4 8-3-3-5 5z" fill="#4a6fc4"/></svg><b>Currents</b></div>
<div class="r a"><b>CPU (Node 0)</b><i>47.80 A</i><em>46.76 A</em><s>58.20 A</s></div>
<div class="g"><u></u><svg width="18" height="18"><rect x="2" y="3" width="14" height="12" fill="#0c3a12"/><path d="M3 11l3-3 2 2 3-4 3 3" stroke="#3fdc4f" fill="none"/></svg><b>Utilization</b></div>
<div class="r a"><b>Processor</b><i>75 %</i><em>0 %</em><s>75 %</s></div>
<div class="r"><b>CPU #0</b><i>70 %</i><em>0 %</em><s>75 %</s></div>
<div class="r a"><b>CPU #1</b><i>73 %</i><em>0 %</em><s>81 %</s></div>
<div class="r"><b>CPU #2</b><i>64 %</i><em>0 %</em><s>73 %</s></div>
<div class="r a"><b>CPU #3</b><i>75 %</i><em>0 %</em><s>78 %</s></div>
<div class="r"><b>CPU #4</b><i>75 %</i><em>0 %</em><s>76 %</s></div>
<div class="r a"><b>CPU #5</b><i>71 %</i><em>0 %</em><s>76 %</s></div>
<div class="r"><b>CPU #6</b><i>75 %</i><em>0 %</em><s>79 %</s></div>
<div class="r a"><b>CPU #7</b><i>75 %</i><em>0 %</em><s>76 %</s></div>
<div class="r"><b>CPU #8</b><i>70 %</i><em>0 %</em><s>78 %</s></div>
<div class="r a"><b>CPU #9</b><i>71 %</i><em>0 %</em><s>76 %</s></div>
<div class="r"><b>CPU #10</b><i>71 %</i><em>0 %</em><s>78 %</s></div>
<div class="r a"><b>CPU #11</b><i>68 %</i><em>0 %</em><s>73 %</s></div>
<div class="r"><b>CPU #12</b><i>68 %</i><em>0 %</em><s>78 %</s></div>
<div class="r a"><b>CPU #13</b><i>73 %</i><em>0 %</em><s>76 %</s></div>
<div class="r"><b>CPU #14</b><i>70 %</i><em>0 %</em><s>78 %</s></div>
<div class="r a"><b>CPU #15</b><i>65 %</i><em>0 %</em><s>76 %</s></div>
<div class="r"><b>CPU #16</b><i>73 %</i><em>0 %</em><s>76 %</s></div>
<div class="r a"><b>CPU #17</b><i>70 %</i><em>0 %</em><s>75 %</s></div>
<div class="r"><b>CPU #18</b><i>68 %</i><em>0 %</em><s>78 %</s></div>
<div class="r a"><b>CPU #19</b><i>73 %</i><em>0 %</em><s>76 %</s></div>
<div class="r"><b>CPU #20</b><i>70 %</i><em>0 %</em><s>76 %</s></div>
<div class="r a"><b>CPU #21</b><i>68 %</i><em>0 %</em><s>76 %</s></div>
<div class="r"><b>CPU #22</b><i>71 %</i><em>0 %</em><s>76 %</s></div>
<div class="r a"><b>CPU #23</b><i>71 %</i><em>0 %</em><s>75 %</s></div>
<div class="r"><b>CPU #24</b><i>70 %</i><em>0 %</em><s>76 %</s></div>
<div class="r a"><b>CPU #25</b><i>70 %</i><em>0 %</em><s>75 %</s></div>
<div class="r"><b>CPU #26</b><i>67 %</i><em>0 %</em><s>78 %</s></div>
<div class="r a"><b>CPU #27</b><i>71 %</i><em>0 %</em><s>76 %</s></div>
<div class="r"><b>CPU #28</b><i>68 %</i><em>0 %</em><s>76 %</s></div>
<div class="r a"><b>CPU #29</b><i>68 %</i><em>0 %</em><s>73 %</s></div>
<div class="r"><b>CPU #30</b><i>73 %</i><em>0 %</em><s>87 %</s></div>
<div class="r a"><b>CPU #31</b><i>75 %</i><em>0 %</em><s>78 %</s></div>
<div class="g"><u></u><svg width="18" height="18"><rect x="1" y="1" width="15" height="15" fill="#dcdce0" stroke="#aaa"/><path d="M4 11V7h3v4h3V7h3v4" stroke="#2a3aa8" fill="none"/></svg><b>Clocks</b></div>
<div class="r a"><b>Core #0</b><i>4299 MHz</i><em>4299 MHz</em><s>4299 MHz</s></div>
<div class="r"><b>Core #1</b><i>4299 MHz</i><em>4299 MHz</em><s>4299 MHz</s></div>
<div class="r a"><b>Core #2</b><i>4299 MHz</i><em>4299 MHz</em><s>4299 MHz</s></div>
</div>
<div class="a0" style="left:482px;top:71px;width:18px;height:979px;background:#f0f0f0"></div>
<div class="a0" style="left:483px;top:358px;width:16px;height:384px;background:#cdcdcd"></div>
<svg class="a0" style="left:485px;top:75px" width="14" height="10"><path d="M2 7l5-5 5 5" stroke="#505050" stroke-width="2" fill="none"/></svg>
<svg class="a0" style="left:485px;top:1035px" width="14" height="10"><path d="M2 2l5 5 5-5" stroke="#505050" stroke-width="2" fill="none"/></svg>
<div class="a0" style="left:2px;top:1048px;width:498px;height:18px;background:#f0f0f0"></div>
<div class="a0" style="left:19px;top:1050px;width:458px;height:15px;background:#cdcdcd"></div>
<svg class="a0" style="left:5px;top:1051px" width="14" height="14"><path d="M9 2L4 7l5 5" stroke="#505050" stroke-width="2" fill="none"/></svg>
<svg class="a0" style="left:484px;top:1051px" width="14" height="14"><path d="M4 2l5 5-5 5" stroke="#505050" stroke-width="2" fill="none"/></svg>
<div class="a0" style="left:0;top:1067px;width:500px;height:20px;background:#f0f0f0"></div>
<div class="x" style="left:2px;top:1070px;font-size:11px;color:#111">Ready</div>
<div class="a0" style="left:393px;top:1069px;width:24px;height:16px;border:1px solid #b8b8b8"></div>
<div class="a0" style="left:421px;top:1069px;width:28px;height:16px;border:1px solid #b8b8b8"></div>
<div class="a0" style="left:451px;top:1069px;width:29px;height:16px;border:1px solid #b8b8b8"></div>
<svg class="a0" style="left:488px;top:1074px" width="12" height="12"><path d="M11 2L2 11M11 5L5 11M11 8l-3 3" stroke="#9a9a9a"/></svg>
<div class="a0" style="left:0;top:52px;width:1px;height:1015px;background:#8a8a8a"></div>
<div class="a0" style="left:1px;top:70px;width:1px;height:996px;background:#c8c8c8"></div>
</div>
<div class="a0" style="left:0;top:1087px;width:501px;height:3px;background:#2f3337"></div>
</body></html>
